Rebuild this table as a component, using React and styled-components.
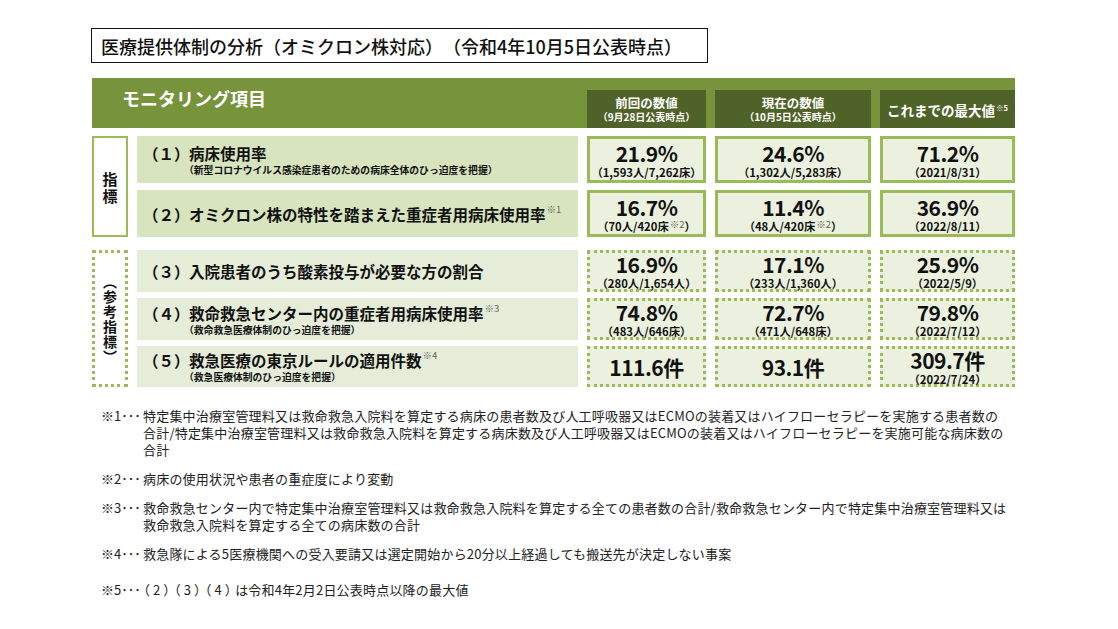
import React from 'react';
import styled, { createGlobalStyle } from 'styled-components';

const GlobalStyle = createGlobalStyle`
  body {
    margin: 0;
    background: #fff;
    color: #111;
    font-family: "Noto Sans CJK JP", "Noto Sans", sans-serif;
    text-spacing-trim: space-all;
  }
`;

const COLS = '36px 441px 119px 156px 135px';

const indicators = [
  {
    no: '（１）',
    title: '病床使用率',
    sub: '（新型コロナウイルス感染症患者のための病床全体のひっ迫度を把握）',
    values: [
      { main: '21.9%', sub: '（1,593人/7,262床）' },
      { main: '24.6%', sub: '（1,302人/5,283床）' },
      { main: '71.2%', sub: '（2021/8/31）' },
    ],
  },
  {
    no: '（２）',
    title: 'オミクロン株の特性を踏まえた重症者用病床使用率',
    mark: '※1',
    values: [
      { main: '16.7%', sub: '（70人/420床', subMark: '※2', subEnd: '）' },
      { main: '11.4%', sub: '（48人/420床', subMark: '※2', subEnd: '）' },
      { main: '36.9%', sub: '（2022/8/11）' },
    ],
  },
];

const references = [
  {
    no: '（３）',
    title: '入院患者のうち酸素投与が必要な方の割合',
    values: [
      { main: '16.9%', sub: '（280人/1,654人）' },
      { main: '17.1%', sub: '（233人/1,360人）' },
      { main: '25.9%', sub: '（2022/5/9）' },
    ],
  },
  {
    no: '（４）',
    title: '救命救急センター内の重症者用病床使用率',
    mark: '※3',
    sub: '（救命救急医療体制のひっ迫度を把握）',
    values: [
      { main: '74.8%', sub: '（483人/646床）' },
      { main: '72.7%', sub: '（471人/648床）' },
      { main: '79.8%', sub: '（2022/7/12）' },
    ],
  },
  {
    no: '（５）',
    title: '救急医療の東京ルールの適用件数',
    mark: '※4',
    sub: '（救急医療体制のひっ迫度を把握）',
    values: [
      { main: '111.6件' },
      { main: '93.1件' },
      { main: '309.7件', sub: '（2022/7/24）' },
    ],
  },
];

const notes = [
  {
    mark: '※1･･･',
    lines: [
      '特定集中治療室管理料又は救命救急入院料を算定する病床の患者数及び人工呼吸器又はECMOの装着又はハイフローセラピーを実施する患者数の',
      '合計/特定集中治療室管理料又は救命救急入院料を算定する病床数及び人工呼吸器又はECMOの装着又はハイフローセラピーを実施可能な病床数の',
      '合計',
    ],
  },
  { mark: '※2･･･', lines: ['病床の使用状況や患者の重症度により変動'] },
  {
    mark: '※3･･･',
    lines: [
      '救命救急センター内で特定集中治療室管理料又は救命救急入院料を算定する全ての患者数の合計/救命救急センター内で特定集中治療室管理料又は',
      '救命救急入院料を算定する全ての病床数の合計',
    ],
  },
  { mark: '※4･･･', lines: ['救急隊による5医療機関への受入要請又は選定開始から20分以上経過しても搬送先が決定しない事案'] },
  { mark: '※5･･･', lead: '（2）（3）（4）', lines: ['は令和4年2月2日公表時点以降の最大値'], extra: true },
];

function ValueBlock({ value, dotted }) {
  return (
    <ValueCell $dotted={dotted}>
      <ValueMain>{value.main}</ValueMain>
      {value.sub && (
        <ValueSub>
          {value.sub}
          {value.subMark && <Mark>{value.subMark}</Mark>}
          {value.subEnd}
        </ValueSub>
      )}
    </ValueCell>
  );
}

function ItemRow({ item, light, dotted }) {
  return (
    <>
      <ItemCell $light={light}>
        <ItemBody>
          <ItemHead>
            <ItemNo>{item.no}</ItemNo>
            {item.title}
            {item.mark && <Mark>{item.mark}</Mark>}
          </ItemHead>
          {item.sub && <ItemSub>{item.sub}</ItemSub>}
        </ItemBody>
      </ItemCell>
      {item.values.map((v, i) => (
        <ValueBlock key={i} value={v} dotted={dotted} />
      ))}
    </>
  );
}

function Vertical({ chars, size, pitch }) {
  return (
    <VerticalStack $size={size}>
      {chars.map((c, i) => (
        <VChar key={i} $pitch={pitch}>
          {c}
        </VChar>
      ))}
    </VerticalStack>
  );
}

function App() {
  return (
    <Page>
      <GlobalStyle />
      <TitleBox>医療提供体制の分析（オミクロン株対応）（令和4年10月5日公表時点）</TitleBox>

      <Table>
        <HeaderBar>
          <HeaderTitle>モニタリング項目</HeaderTitle>
          <HeadCell>
            <HeadMain>前回の数値</HeadMain>
            <HeadSub>（9月28日公表時点）</HeadSub>
          </HeadCell>
          <HeadCell>
            <HeadMain>現在の数値</HeadMain>
            <HeadSub>（10月5日公表時点）</HeadSub>
          </HeadCell>
          <HeadCell>
            <HeadMain $large>
              これまでの最大値<HeadMark>※5</HeadMark>
            </HeadMain>
          </HeadCell>
        </HeaderBar>

        <Section $top={8} $gap={7} $rows="47px 47px">
          <SideLabel>
            <Vertical chars={['指', '標']} size={15} pitch={17} />
          </SideLabel>
          {indicators.map((item) => (
            <ItemRow key={item.no} item={item} />
          ))}
        </Section>

        <Section $top={13} $gap={6} $rows="42px 42px 41px">
          <SideLabel $dotted>
            <Vertical chars={['︵', '参', '考', '指', '標', '︶']} size={14} pitch={15} />
          </SideLabel>
          {references.map((item) => (
            <ItemRow key={item.no} item={item} light dotted />
          ))}
        </Section>
      </Table>

      <Notes>
        {notes.map((n) => (
          <Note key={n.mark} $extra={n.extra}>
            <NoteMark>{n.mark}</NoteMark>
            <NoteText>
              {n.lines.map((l, i) => (
                <NoteLine key={i}>
                  {i === 0 && n.lead && <NoteLead>{n.lead}</NoteLead>}
                  {l}
                </NoteLine>
              ))}
            </NoteText>
          </Note>
        ))}
      </Notes>
    </Page>
  );
}

const Page = styled.div`
  padding: 28px 0 0 91px;
`;

const TitleBox = styled.div`
  width: 617px;
  height: 35px;
  box-sizing: border-box;
  border: 1.5px solid #111;
  display: flex;
  align-items: center;
  padding-left: 9px;
  font-size: 18px;
  font-weight: 500;
  white-space: nowrap;
`;

const Table = styled.div`
  width: 923px;
  margin: 15px 0 0 1px;
`;

const HeaderBar = styled.div`
  display: grid;
  grid-template-columns: ${COLS};
  column-gap: 9px;
  height: 50px;
  background: #77933c;
`;

const HeaderTitle = styled.div`
  grid-column: 1 / span 2;
  padding: 7px 0 0 30px;
  color: #fff;
  font-size: 18px;
  font-weight: 700;
`;

const HeadCell = styled.div`
  align-self: end;
  height: 38px;
  background: #4f6228;
  color: #fff;
  display: flex;
  flex-direction: column;
  align-items: center;
  justify-content: center;
  font-weight: 700;
  white-space: nowrap;
`;

const HeadMain = styled.div`
  font-size: ${(p) => (p.$large ? '13.5px' : '12.5px')};
  line-height: 15px;
`;

const HeadSub = styled.div`
  font-size: 10px;
  line-height: 13px;
`;

const HeadMark = styled.span`
  font-size: 7.5px;
  vertical-align: 5px;
  margin-left: 1px;
`;

const Section = styled.div`
  display: grid;
  grid-template-columns: ${COLS};
  grid-template-rows: ${(p) => p.$rows};
  column-gap: 9px;
  row-gap: ${(p) => p.$gap}px;
  margin-top: ${(p) => p.$top}px;
`;

const SideLabel = styled.div`
  grid-row: 1 / -1;
  box-sizing: border-box;
  border: ${(p) => (p.$dotted ? '3px dotted #9bbb59' : '2.5px solid #9bbb59')};
  background: #fff;
  display: flex;
  align-items: center;
  justify-content: center;
`;

const VerticalStack = styled.div`
  display: flex;
  flex-direction: column;
  align-items: center;
  font-size: ${(p) => p.$size}px;
  font-weight: 700;
`;

const VChar = styled.span`
  display: block;
  height: ${(p) => p.$pitch}px;
  line-height: ${(p) => p.$pitch}px;
`;

const ItemCell = styled.div`
  background: ${(p) => (p.$light ? '#e5ecd8' : '#d7e4bd')};
  display: flex;
  align-items: center;
  padding-left: 6px;
  white-space: nowrap;
`;

const ItemBody = styled.div`
  display: flex;
  flex-direction: column;
`;

const ItemHead = styled.div`
  display: flex;
  align-items: baseline;
  font-size: 15.5px;
  font-weight: 700;
  line-height: 20px;
`;

const ItemNo = styled.span`
  width: 46px;
  flex-shrink: 0;
`;

const ItemSub = styled.div`
  font-size: 9.8px;
  font-weight: 700;
  line-height: 12px;
  margin: 1px 0 0 41px;
`;

const Mark = styled.span`
  font-size: 9.5px;
  font-weight: 400;
  color: #666;
  align-self: flex-start;
  position: relative;
  top: -1px;
  margin-left: 1px;
  line-height: 12px;
`;

const ValueCell = styled.div`
  box-sizing: border-box;
  border: 3px ${(p) => (p.$dotted ? 'dotted' : 'solid')} #9bbb59;
  background: #ebf1de;
  display: flex;
  flex-direction: column;
  align-items: center;
  justify-content: center;
  white-space: nowrap;
`;

const ValueMain = styled.div`
  font-size: 21px;
  font-weight: 700;
  line-height: 24px;
  letter-spacing: -0.5px;
`;

const ValueSub = styled.div`
  font-size: 11.3px;
  font-weight: 700;
  line-height: 14px;
  display: flex;
  align-items: baseline;
`;

const Notes = styled.div`
  display: flex;
  flex-direction: column;
  gap: 12px;
  margin: 20px 0 0 10px;
  font-size: 13px;
  line-height: 17px;
  color: #222;
`;

const Note = styled.div`
  display: grid;
  grid-template-columns: 42px auto;
  margin-top: ${(p) => (p.$extra ? '7px' : '0')};
`;

const NoteMark = styled.span`
  white-space: nowrap;
`;

const NoteText = styled.div`
  display: flex;
  flex-direction: column;
`;

const NoteLine = styled.span`
  white-space: nowrap;
  letter-spacing: 0.2px;
`;

const NoteLead = styled.span`
  font-feature-settings: "palt";
  letter-spacing: 3.5px;
`;

export default App;
